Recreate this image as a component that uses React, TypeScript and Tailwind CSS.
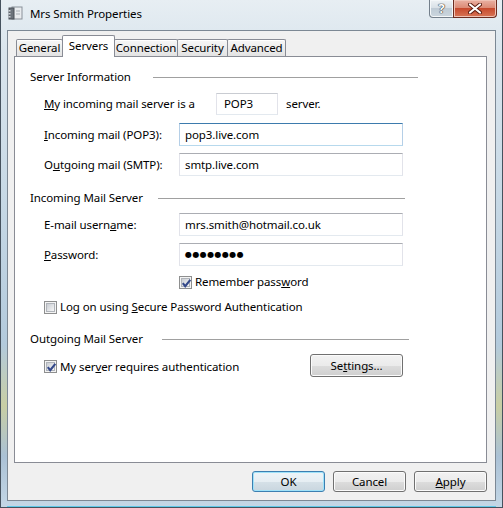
import React from "react";

function Check({ checked }: { checked?: boolean }) {
  return (
    <span className="relative inline-flex w-[13px] h-[13px] shrink-0 items-center justify-center border border-[#8e8f8f] bg-[#f4f4f4]">
      <span className="w-[9px] h-[9px] border border-[#b0b4ba] bg-[linear-gradient(135deg,#c9cdd3,#f7f7f7)]" />
      {checked && (
        <svg className="absolute left-[1px] top-[1px]" width="11" height="11" viewBox="0 0 11 11">
          <path d="M1.8 5.2 L4.2 8.2 L9.3 1.8" fill="none" stroke="#34498a" strokeWidth="2.1" strokeLinejoin="miter" />
        </svg>
      )}
    </span>
  );
}

function Field({ children, focused }: { children: React.ReactNode; focused?: boolean }) {
  return (
    <div
      className={
        focused
          ? "w-[224px] h-[23px] flex items-center pl-[5px] bg-white border border-[#b5cfe7] border-t-[#3d7bad] border-b-[#b7d9ed]"
          : "w-[224px] h-[23px] flex items-center pl-[5px] bg-white border border-[#e2e3ea] border-t-[#abadb3] border-b-[#e3e9ef]"
      }
    >
      {children}
    </div>
  );
}

function Btn({ children, def, className }: { children: React.ReactNode; def?: boolean; className?: string }) {
  return (
    <div
      className={
        (def
          ? "border-[#3c7fb1] shadow-[inset_0_0_0_1px_#9fe2f9] bg-[linear-gradient(#eef4f8_0%,#e6eef3_50%,#d6e1e8_50%,#c9d6df_100%)] "
          : "border-[#707070] shadow-[inset_0_0_0_1px_#fbfbfb] bg-[linear-gradient(#f2f2f2_0%,#ebebeb_50%,#dddddd_50%,#cfcfcf_100%)] ") +
        "flex items-center justify-center rounded-[3px] border " +
        (className ?? "")
      }
    >
      {children}
    </div>
  );
}

function Header({ text, boxW, lineW, mt }: { text: string; boxW: string; lineW: string; mt: string }) {
  return (
    <div className={"flex items-center h-[18px] " + mt}>
      <div className={boxW}>{text}</div>
      <div className={"h-0 border-t border-[#a0a0a0] " + lineW} />
    </div>
  );
}

const tabOff =
  "h-[17px] -ml-px flex items-center justify-center border border-b-0 border-[#898c95] rounded-t-[2px] bg-[linear-gradient(180deg,#f7f7f7,#e3e3e3)] shadow-[inset_0_1px_0_#ffffff]";

export default function App() {
  return (
    <div className="w-[503px] h-[508px] overflow-hidden font-['Noto_Sans',sans-serif] text-[11.5px] tracking-[-0.1px] leading-[16px] text-black">
      <div className="w-full h-full flex flex-col border-x border-b border-[#46525e] bg-[linear-gradient(180deg,#e7eef3_0%,#dae5ed_10%,#c6d8e5_40%,#b3cadc_68%,#c8cea4_80%,#aac1d5_90%,#c4d7e6_100%)]">
        {/* title bar */}
        <div className="h-[30px] flex items-start shrink-0">
          <svg className="ml-[7px] mt-[6px]" width="15" height="14" viewBox="0 0 15 14">
            <rect x="4" y="1" width="10" height="12" fill="#e9ecef" stroke="#8a9199" />
            <rect x="1" y="2" width="5" height="11" fill="#6c737b" stroke="#4a5058" />
            <rect x="0.5" y="4" width="2" height="1.5" fill="#cfd4d9" />
            <rect x="0.5" y="7" width="2" height="1.5" fill="#cfd4d9" />
            <rect x="0.5" y="10" width="2" height="1.5" fill="#cfd4d9" />
            <line x1="8" y1="5" x2="12" y2="5" stroke="#a9b0b7" />
            <line x1="8" y1="8" x2="12" y2="8" stroke="#a9b0b7" />
          </svg>
          <div className="ml-[7px] mt-[6px] text-[11.5px] leading-[16px]">Mrs Smith Properties</div>
          <div className="ml-auto flex">
            <div className="w-[25px] h-[18px] flex items-center justify-center border border-[#737f8b] border-t-0 rounded-bl-[4px] bg-[linear-gradient(180deg,#eef2f5_0%,#d9e1e7_45%,#bfcbd5_50%,#cbd6de_100%)] shadow-[inset_0_0_0_1px_#f4f7f9]">
              <span className="text-white font-bold text-[13px] leading-[13px] [text-shadow:0_0_1px_#333,0_0_1px_#333,0_0_1px_#333]">?</span>
            </div>
            <div className="w-[44px] h-[18px] mr-[5px] -ml-px flex items-center justify-center border border-[#6b2c20] border-t-0 rounded-br-[4px] bg-[linear-gradient(180deg,#eab1a3_0%,#dc8b76_45%,#c74a2e_50%,#d77556_100%)] shadow-[inset_0_0_0_1px_#f0c2b5]">
              <svg width="14" height="11" viewBox="0 0 14 11">
                <path d="M2 1.5 L12 9.5 M12 1.5 L2 9.5" stroke="#5a1b10" strokeWidth="4" strokeLinecap="round" />
                <path d="M2 1.5 L12 9.5 M12 1.5 L2 9.5" stroke="#ffffff" strokeWidth="2.2" strokeLinecap="round" />
              </svg>
            </div>
          </div>
        </div>

        {/* client area */}
        <div className="mx-[6px] h-[471px] shrink-0 border border-[#7c8894] bg-[#f0f0f0] pt-[4px] pl-[6px] pr-[8px] flex flex-col">
          {/* tabs */}
          <div className="h-[21px] flex items-end pl-[2px]">
            <div className={tabOff + " w-[47px] ml-0"}>General</div>
            <div className="relative z-10 -mb-px -ml-px w-[53px] h-[22px] flex items-start justify-center pt-[2px] border border-b-0 border-[#898c95] rounded-t-[2px] bg-white">Servers</div>
            <div className={tabOff + " w-[64px]"}>Connection</div>
            <div className={tabOff + " w-[51px]"}>Security</div>
            <div className={tabOff + " w-[59px]"}>Advanced</div>
          </div>

          {/* panel */}
          <div className="w-[473px] h-[407px] border border-[#898c95] bg-white pl-[15px] flex flex-col">
            <Header text="Server Information" boxW="w-[123px]" lineW="w-[265px]" mt="mt-[11px]" />

            <div className="flex items-center h-[22px] mt-[7px] pl-[14px]">
              <div className="w-[172px]"><u>M</u>y incoming mail server is a</div>
              <div className="w-[62px] h-[22px] flex items-center pl-[7px] border border-[#e2e3ea] border-t-[#c9ccd2] border-b-[#e3e9ef]">POP3</div>
              <div className="ml-[8px]">server.</div>
            </div>

            <div className="flex items-center h-[23px] mt-[8px] pl-[14px]">
              <div className="w-[135px]"><u>I</u>ncoming mail (POP3):</div>
              <Field focused>pop3.live.com</Field>
            </div>

            <div className="flex items-center h-[23px] mt-[7px] pl-[14px]">
              <div className="w-[135px]">O<u>u</u>tgoing mail (SMTP):</div>
              <Field>smtp.live.com</Field>
            </div>

            <Header text="Incoming Mail Server" boxW="w-[128px]" lineW="w-[247px]" mt="mt-[13px]" />

            <div className="flex items-center h-[23px] mt-[6px] pl-[14px]">
              <div className="w-[135px]">E-mail usern<u>a</u>me:</div>
              <Field>mrs.smith@hotmail.co.uk</Field>
            </div>

            <div className="flex items-center h-[23px] mt-[7px] pl-[14px]">
              <div className="w-[135px]"><u>P</u>assword:</div>
              <Field>
                <span className="font-['DejaVu_Sans',sans-serif] text-[8px] leading-[10px] tracking-[0.4px]">●●●●●●●●</span>
              </Field>
            </div>

            <div className="flex items-center h-[16px] mt-[8px] pl-[149px]">
              <Check checked />
              <div className="ml-[3px]">Remember pass<u>w</u>ord</div>
            </div>

            <div className="flex items-center h-[16px] mt-[9px] pl-[14px]">
              <Check />
              <div className="ml-[3px]">Log on using <u>S</u>ecure Password Authentication</div>
            </div>

            <Header text="Outgoing Mail Server" boxW="w-[132px]" lineW="w-[247px]" mt="mt-[15px]" />

            <div className="flex items-center h-[23px] mt-[6px] pl-[14px]">
              <div className="w-[266px] flex items-center pt-[2px]">
                <Check checked />
                <div className="ml-[3px]">My ser<u>v</u>er requires authentication</div>
              </div>
              <Btn className="w-[93px] h-[23px]">Se<u>t</u>tings...</Btn>
            </div>
          </div>

          {/* buttons */}
          <div className="mt-[8px] flex justify-end gap-[8px]">
            <Btn def className="w-[73px] h-[21px]">OK</Btn>
            <Btn className="w-[73px] h-[21px]">Cancel</Btn>
            <Btn className="w-[73px] h-[21px]"><u>A</u>pply</Btn>
          </div>
        </div>
        <div className="mt-auto h-px mx-[6px] bg-[#5fc8e8]" />
      </div>
    </div>
  );
}
